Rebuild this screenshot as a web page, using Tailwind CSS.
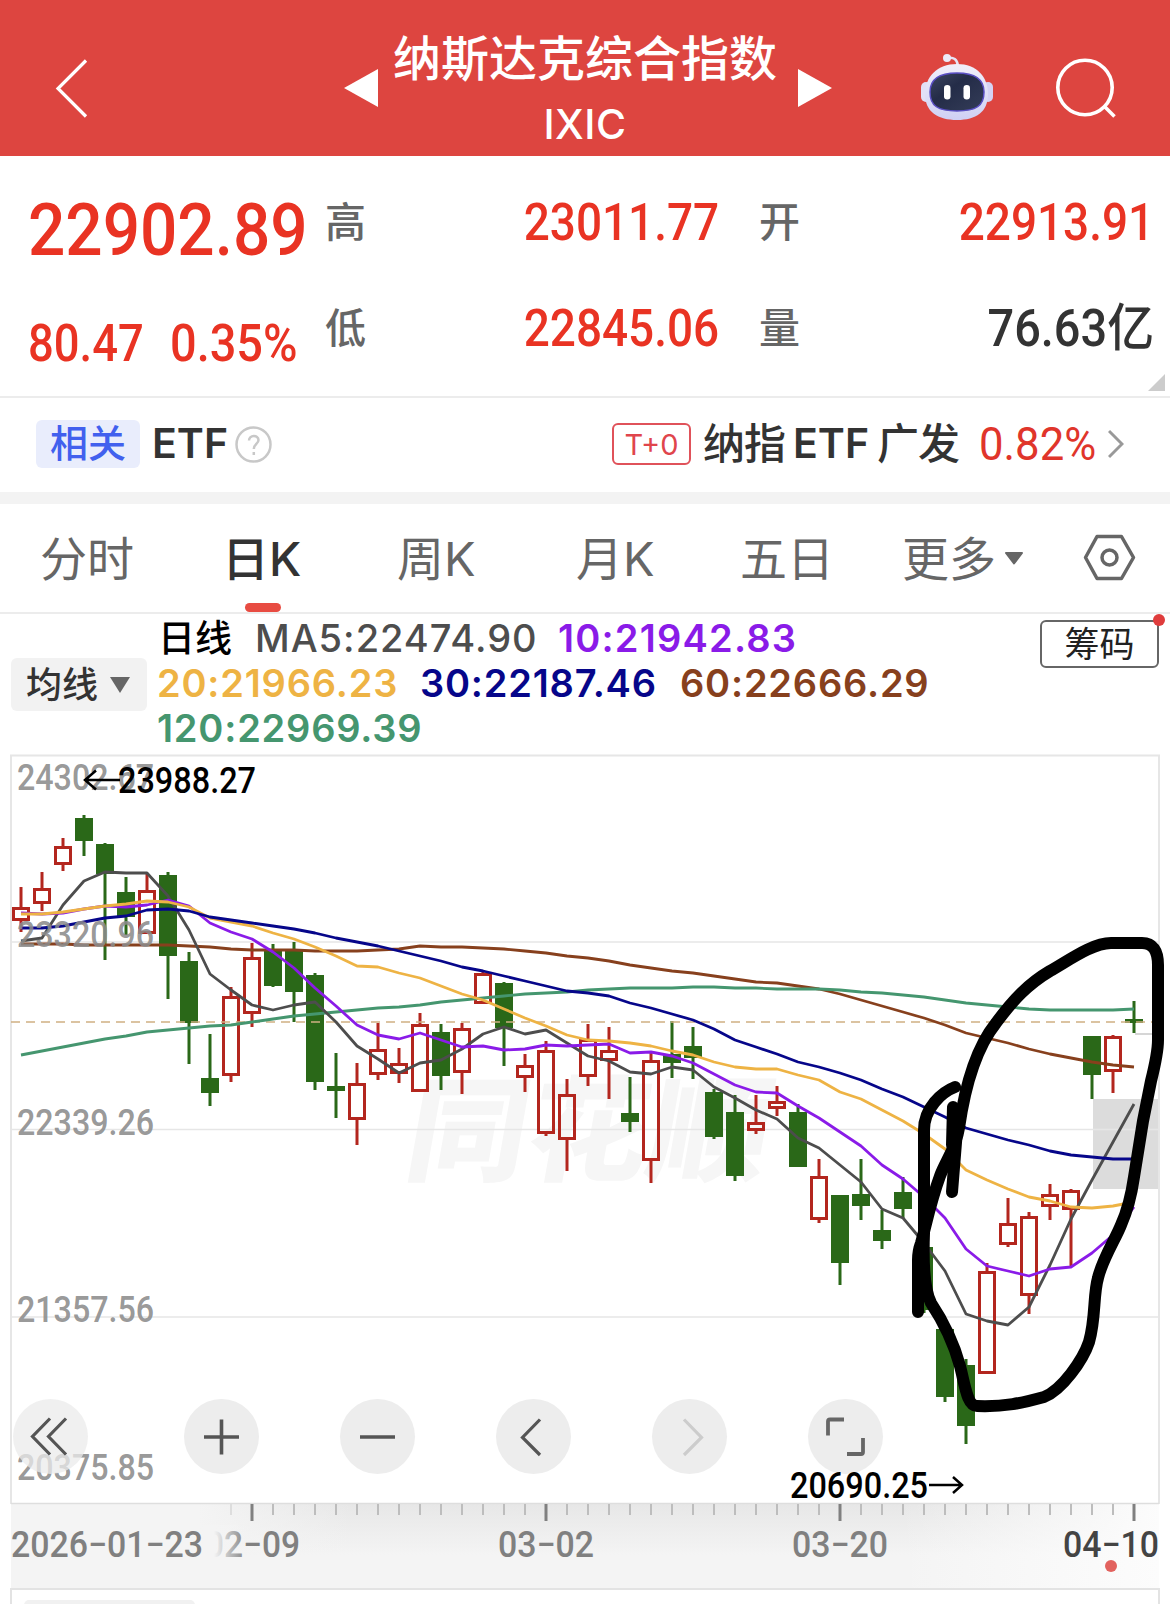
<!DOCTYPE html>
<html lang="zh-CN">

<head>
    <meta charset="UTF-8">
    <meta name="viewport" content="width=device-width, initial-scale=1.0">
    <title>纳斯达克综合指数 IXIC</title>
    <script src="https://cdn.jsdelivr.net/npm/@tailwindcss/browser@4"></script>
</head>

<body class="w-[1170px] h-[1604px] overflow-hidden bg-white font-['Roboto','Noto_Sans_CJK_SC',sans-serif] text-[#333]">
    <!-- Header -->
    <header class="flex h-[156px] bg-[#dd4540] text-white">
        <svg class="ml-[52px] w-10 h-[156px]" viewBox="52 0 40 156" fill="none" stroke="white" stroke-width="3.2">
            <path d="M86 60.500L58 88.500L86 116.500" />
        </svg>
        <svg class="ml-[252px] w-[34px] h-[156px]" viewBox="344 0 34 156" fill="white">
            <path d="M344 88L378 69V107Z" />
        </svg>
        <div class="w-[420px] flex flex-col items-center pt-[31px] pr-[6px] font-['Inter','Noto_Sans_CJK_SC',sans-serif] font-medium">
            <h1 class="h-14 leading-[56px] text-[48px] whitespace-nowrap">纳斯达克综合指数</h1>
            <p class="mt-[13px] leading-[48px] text-[41px] tracking-[0.5px]">IXIC</p>
        </div>
        <svg class="w-[34px] h-[156px]" viewBox="798 0 34 156" fill="white">
            <path d="M832 88L798 69V107Z" />
        </svg>
        <svg class="ml-[86px] w-[78px] h-[156px]" viewBox="918 0 78 156">
            <defs>
                <linearGradient id="shell" x1="0" y1="0" x2="0" y2="1">
                    <stop offset="0" stop-color="#f1effa" />
                    <stop offset="1" stop-color="#cfd0f4" />
                </linearGradient>
                <linearGradient id="visor" x1="0" y1="0" x2="1" y2="1">
                    <stop offset="0" stop-color="#3d4660" />
                    <stop offset="0.4" stop-color="#242c48" />
                    <stop offset="1" stop-color="#343d58" />
                </linearGradient>
            </defs>
            <path d="M947 58Q957 56 958 66" fill="none" stroke="#e6e3f4" stroke-width="2.500" />
            <circle cx="947" cy="58" r="4" fill="#eceaf8" />
            <rect x="921" y="82" width="10" height="20" rx="5" fill="#e2e0f6" />
            <rect x="983" y="82" width="10" height="20" rx="5" fill="#d5d3f4" />
            <path d="M957 64C977 64 988 77 988 94C988 112 976 120 957 120C938 120 925 112 925 94C925 77 937 64 957 64Z" fill="url(#shell)" />
            <path d="M957 73C976 73 984 80 984 92C984 106 976 111 957 111C938 111 930 106 930 92C930 80 938 73 957 73Z" fill="url(#visor)" stroke="#5a4fc4" stroke-width="1.500" />
            <rect x="944" y="85" width="6.500" height="14.500" rx="3.200" fill="white" />
            <rect x="963.500" y="85" width="6.500" height="14.500" rx="3.200" fill="white" />
        </svg>
        <svg class="ml-[58px] w-16 h-[156px]" viewBox="1054 0 64 156" fill="none" stroke="white" stroke-width="3.600">
            <circle cx="1085" cy="87.500" r="27.200" />
            <path d="M1104 106L1114.500 116.500" />
        </svg>
    </header>

    <!-- Quote -->
    <section class="relative flex h-[240px] font-medium text-[#e93323] whitespace-nowrap">
        <div class="w-[325px] pl-7">
            <p class="mt-[29px] h-[90px] leading-[90px] text-[73px] origin-left scale-x-90">22902.89</p>
            <p class="mt-[39px] h-[60px] leading-[60px] text-[51px] flex">
                <span class="w-[142px]"><span class="inline-block origin-left scale-x-[0.89]">80.47</span></span>
                <span class="inline-block origin-left scale-x-[0.92]">0.35%</span>
            </p>
        </div>
        <div class="w-[394px]">
            <div class="mt-[37px] h-[60px] flex items-center justify-between">
                <span class="pt-[2px] text-[41px] text-[#666]">高</span>
                <span class="text-[51px] origin-right scale-x-90">23011.77</span>
            </div>
            <div class="mt-[46px] h-[60px] flex items-center justify-between">
                <span class="pt-[2px] text-[41px] text-[#666]">低</span>
                <span class="text-[51px] origin-right scale-x-90">22845.06</span>
            </div>
        </div>
        <div class="ml-10 w-[395px]">
            <div class="mt-[37px] h-[60px] flex items-center justify-between">
                <span class="pt-[2px] text-[41px] text-[#666]">开</span>
                <span class="text-[51px] origin-right scale-x-90">22913.91</span>
            </div>
            <div class="mt-[46px] h-[60px] flex items-center justify-between">
                <span class="pt-[2px] text-[41px] text-[#666]">量</span>
                <span class="text-[51px] text-[#333] origin-right scale-x-[0.92]">76.63亿</span>
            </div>
        </div>
        <svg class="absolute right-[5px] bottom-[5px] w-[17px] h-[17px]" viewBox="0 0 17 17" fill="#ccc">
            <path d="M17 0V17H0Z" />
        </svg>
    </section>

    <!-- Related ETF -->
    <section class="flex items-center h-24 border-t-2 border-[#ececec] pl-9 pb-[2px] whitespace-nowrap">
        <span class="w-[104px] h-12 leading-[48px] rounded-md bg-[#e9edfc] text-center text-[38px] font-medium text-[#4160ee]">相关</span>
        <span class="ml-[12px] w-[80px] font-['Inter'] text-[41px] font-semibold">ETF</span>
        <svg class="ml-[3px] w-[37px] h-[37px]" viewBox="0 0 37 37" fill="none" stroke="#c8c8c8" stroke-width="2.500">
            <circle cx="18.500" cy="18.500" r="17" />
            <path d="M14 14.500C14 8.500 23.500 8.500 23.500 14C23.500 18 18.800 18 18.800 23" />
            <path d="M18.800 26V29" />
        </svg>
        <span class="ml-[340px] w-[79px] h-[42px] leading-[40px] border-2 border-[#e0525a] rounded-md text-center font-['Inter'] text-[29px] text-[#e0454c]">T+0</span>
        <span class="ml-[12px] text-[42px] font-medium w-[256px] flex justify-between"><span class="-tracking-[1px]">纳指</span><span class="font-['Inter'] text-[41px] font-semibold">ETF</span><span class="-tracking-[1px]">广发</span></span>
        <span class="ml-5 w-[121px] text-[47px] text-[#e0352b]"><span class="inline-block origin-left scale-x-[0.93]">0.82%</span></span>
        <svg class="ml-2 w-4 h-8" viewBox="0 0 16 32" fill="none" stroke="#999" stroke-width="3">
            <path d="M1 3L14 16L1 29" />
        </svg>
    </section>
    <div class="h-3 bg-[#f3f3f3]"></div>

    <!-- Period tabs -->
    <nav class="flex h-[110px] border-b-2 border-[#ececec] pl-10 text-[47px] leading-[109px] text-[#666] font-normal font-['Inter','Noto_Sans_CJK_SC',sans-serif] whitespace-nowrap">
        <span class="w-[182px]">分时</span>
        <span class="relative w-[175px] font-medium text-[#333]">日K<i class="absolute left-[23px] bottom-0 w-9 h-[9px] rounded-full bg-[#e84c42]"></i></span>
        <span class="w-[179px]">周K</span>
        <span class="w-[164px]">月K</span>
        <span class="w-[162px]">五日</span>
        <span class="w-[102px]">更多</span>
        <svg class="w-5 h-[108px]" viewBox="1004 504 20 108" fill="#666">
            <path d="M1006 553H1022L1014 563.500Z" stroke="#666" stroke-width="2" stroke-linejoin="round" />
        </svg>
        <svg class="ml-[58px] w-[56px] h-[108px]" viewBox="1082 504 56 108" fill="none" stroke="#666" stroke-width="3.500">
            <path d="M1097 536.500H1121.500L1133.500 557.500L1121.500 578.500H1097L1085.500 557.500Z" stroke-linejoin="round" />
            <circle cx="1109.500" cy="557.500" r="7.500" />
        </svg>
    </nav>

    <!-- Moving averages -->
    <section class="flex h-[136px] font-['Inter','Noto_Sans_CJK_SC',sans-serif] whitespace-nowrap">
        <button class="ml-[11px] mt-11 w-[136px] h-[53px] rounded-md bg-[#f2f2f2] flex items-center pl-[15px] text-[36px] font-medium text-[#333]">均线
            <svg class="ml-[11px] w-[22px] h-4" viewBox="0 0 22 16" fill="#666">
                <path d="M1 0H21L11 16Z" />
            </svg>
        </button>
        <div class="ml-[10px] w-[883px] pt-[2px] text-[38px] leading-[45px] font-semibold tracking-[0.8px]">
            <div class="flex h-[45px]">
                <span class="pl-[1px] w-[98px] text-[37px] tracking-normal font-medium text-black">日线</span>
                <span class="w-[303px] font-medium tracking-[1px] text-[#4d4d4d]">MA5:22474.90</span>
                <span class="tracking-[1.2px] text-[#8a1be8]">10:21942.83</span>
            </div>
            <div class="flex h-[45px]">
                <span class="w-[263px] text-[#eeb344]">20:21966.23</span>
                <span class="w-[260px] text-[#06068a]">30:22187.46</span>
                <span class="text-[#87401d]">60:22666.29</span>
            </div>
            <div class="h-[45px] text-[#45966f]">120:22969.39</div>
        </div>
        <button class="relative mt-[6px] w-[119px] h-12 leading-[44px] border-2 border-[#666] rounded-md text-[35px] font-normal text-[#222]">筹码
            <i class="absolute -right-[8px] -top-[8px] w-3 h-3 rounded-full bg-[#df3c3c]"></i>
        </button>
    </section>

    <!-- Candlestick chart -->
    <main class="relative">
        <svg id="chart" class="block w-[1170px] h-[854px]" viewBox="0 0 1170 854" font-family="Roboto" font-size="36" font-weight="500">
            <defs>
                <linearGradient id="axis" x1="0" y1="0" x2="0" y2="1">
                    <stop offset="0" stop-color="#e7e7e7" />
                    <stop offset="0.6" stop-color="#f4f4f4" />
                </linearGradient>
                <linearGradient id="fadeLeft" x1="0" y1="0" x2="1" y2="0">
                    <stop offset="0" stop-color="#f4f4f4" />
                    <stop offset="0.550" stop-color="#f4f4f4" />
                    <stop offset="1" stop-color="#f4f4f4" stop-opacity="0" />
                </linearGradient>
                <linearGradient id="fadeText" x1="0" y1="0" x2="1" y2="0">
                    <stop offset="0.250" stop-color="#f4f4f4" />
                    <stop offset="1" stop-color="#f4f4f4" stop-opacity="0" />
                </linearGradient>
                <linearGradient id="fadeRight" x1="0" y1="0" x2="1" y2="0">
                    <stop offset="0" stop-color="#fcfcfc" stop-opacity="0" />
                    <stop offset="1" stop-color="#fcfcfc" />
                </linearGradient>
            </defs>
            <text x="402" y="422" font-family="Noto Sans CJK SC" font-size="114" font-weight="900" fill="#f6f6f6" textLength="362" lengthAdjust="spacingAndGlyphs" transform="translate(74 0) skewX(-10)">同花顺</text>
            <rect x="1093" y="349" width="66" height="90" fill="#dcdcdc" />
            <path d="M1135 284H1155" stroke="#d6d6d6" stroke-width="2" />
            <g fill="none" stroke="#e6e6e6" stroke-width="2">
                <path d="M11 754V5.500H1159V754" />
                <path d="M11 192H1159M11 379.500H1159M11 567H1159" stroke-width="1.500" />
            </g>
            <g id="candles"></g>
            <path d="M11 272H1159" stroke="#cfb083" stroke-width="1.600" stroke-dasharray="9 6" />
            <g id="lines" fill="none" stroke-width="2.800" stroke-linejoin="round"></g>

            <g fill="#8c8c8c" fill-opacity="0.900">
                <text x="17" y="40" textLength="137" lengthAdjust="spacingAndGlyphs">24302.67</text>
                <text x="17" y="197" textLength="137" lengthAdjust="spacingAndGlyphs">23320.96</text>
                <text x="17" y="384.500" textLength="137" lengthAdjust="spacingAndGlyphs">22339.26</text>
                <text x="17" y="572" textLength="137" lengthAdjust="spacingAndGlyphs">21357.56</text>
                <text x="17" y="729.500" textLength="137" lengthAdjust="spacingAndGlyphs">20375.85</text>
            </g>
            <g fill="none" stroke="black" stroke-width="2.500">
                <path d="M120 30H85M96 20.500L85 30L96 39.500" />
                <path d="M929 735H962M953 727L962 735L953 743" />
            </g>
            <text x="118" y="43" textLength="138" lengthAdjust="spacingAndGlyphs">23988.27</text>

            <!-- Hand drawn circle -->
            <g fill="none" stroke="black" stroke-width="12" stroke-linecap="round" stroke-linejoin="round">
                <path d="M955 337C942 342 924 358 924 380V483Q922 535 931 553Q951 583 960 616C965 635 967 656 977 656C1005 657 1022 653 1044 647C1062 640 1083 610 1089 592C1096 568 1093 545 1098 528C1102 510 1116 488 1121 475Q1130 455 1134 427L1143 371L1151 331Q1158 303 1158 290V215Q1158 193 1142 193H1111C1092 193 1068 211 1050 221C1028 234 1013 250 996 273C972 303 963 350 959 378C956 398 946 410 940 426C930 453 925 480 921 493Q918 501 918 510V562" />
                <path d="M953 357L952 395M957 380L952 442" />
            </g>

            <!-- Date axis -->
            <rect x="11" y="754" width="1148" height="85" fill="url(#axis)" />
            <rect x="11" y="754" width="340" height="85" fill="url(#fadeLeft)" />
            <rect x="900" y="754" width="259" height="85" fill="url(#fadeRight)" />
            <path d="M11 753.500H1159" stroke="#dedede" stroke-width="1.500" />
            <g id="ticks"></g>
            <g fill="#808080">
                <text x="205" y="807" textLength="95" lengthAdjust="spacingAndGlyphs">02−09</text>
                <rect x="203" y="775" width="44" height="40" fill="url(#fadeText)" />
                <text x="11" y="807" textLength="192" lengthAdjust="spacingAndGlyphs">2026−01−23</text>
                <text x="498" y="807" textLength="96" lengthAdjust="spacingAndGlyphs">03−02</text>
                <text x="792" y="807" textLength="96" lengthAdjust="spacingAndGlyphs">03−20</text>
                <text x="1063" y="807" textLength="96" lengthAdjust="spacingAndGlyphs" fill="#444">04−10</text>
            </g>
            <circle cx="1111" cy="816" r="6" fill="#e2625e" />
            <path d="M11 854V839H1159V854" fill="none" stroke="#e3e3e3" stroke-width="2" />
            <rect x="24" y="850" width="171" height="20" rx="5" fill="#f1f1f1" />
        </svg>

        <!-- Chart controls -->
        <div class="absolute left-[13px] top-[649px] flex">
            <button class="w-[75px] h-[75px] rounded-full bg-[#ebebeb]/75">
                <svg viewBox="0 0 75 75" fill="none" stroke="#555" stroke-width="3.200"><path d="M37 19.500L19.500 37.500L37 55.500M53 19.500L35.500 37.500L53 55.500" /></svg>
            </button>
            <button class="ml-[96px] w-[75px] h-[75px] rounded-full bg-[#ededed]">
                <svg viewBox="0 0 75 75" fill="none" stroke="#555" stroke-width="3.600"><path d="M20 38H55M37.500 20.500V55.500" /></svg>
            </button>
            <button class="ml-[81px] w-[75px] h-[75px] rounded-full bg-[#ededed]">
                <svg viewBox="0 0 75 75" fill="none" stroke="#555" stroke-width="3.600"><path d="M20 38H55" /></svg>
            </button>
            <button class="ml-[81px] w-[75px] h-[75px] rounded-full bg-[#ededed]">
                <svg viewBox="0 0 75 75" fill="none" stroke="#555" stroke-width="3.200"><path d="M44 20.500L26.500 38.500L44 56" /></svg>
            </button>
            <button class="ml-[81px] w-[75px] h-[75px] rounded-full bg-[#ededed]">
                <svg viewBox="0 0 75 75" fill="none" stroke="#ccc" stroke-width="3.200"><path d="M32 20.500L49.500 38.500L32 56" /></svg>
            </button>
            <button class="ml-[81px] w-[75px] h-[75px] rounded-full bg-[#ededed]">
                <svg viewBox="0 0 75 75" fill="none" stroke="#666" stroke-width="3.800"><path d="M36 20.500H22Q20 20.500 20 22.500V36.500M39 55H53Q55 55 55 53V39" /></svg>
            </button>
        </div>
        <!-- Low marker sits above the controls -->
        <svg class="absolute left-[780px] top-[706px] w-[160px] h-[60px]" viewBox="780 706 160 60" font-family="Roboto" font-size="36" font-weight="500">
            <text x="790" y="748" textLength="138" lengthAdjust="spacingAndGlyphs">20690.25</text>
        </svg>
    </main>

    <script>
        const NS = 'http://www.w3.org/2000/svg';
        const xAt = i => 21 + i * 21;

        function add(parent, tag, attrs) {
            const el = document.createElementNS(NS, tag);
            for (const key in attrs) el.setAttribute(key, attrs[key]);
            parent.appendChild(el);
        }

        // [up, high, body top, body bottom, low]
        const candles = [
            [1, 137, 157, 171, 182], [1, 122, 138, 154, 161], [1, 88, 96, 115, 121], [0, 65, 68, 91, 106],
            [0, 93, 94, 124, 210], [0, 127, 142, 167, 185], [1, 124, 140, 184, 184], [0, 122, 125, 206, 249],
            [0, 202, 211, 273, 314], [0, 284, 328, 343, 356], [1, 237, 246, 326, 332], [1, 193, 207, 264, 277],
            [0, 194, 200, 236, 237], [0, 192, 200, 242, 272], [0, 223, 225, 332, 340], [0, 303, 336, 341, 368],
            [1, 313, 333, 370, 395], [1, 273, 299, 325, 330], [1, 298, 313, 324, 333], [1, 263, 274, 342, 342],
            [0, 274, 282, 326, 340], [1, 273, 278, 323, 344], [1, 220, 223, 254, 254], [0, 232, 233, 278, 316],
            [1, 304, 315, 328, 342], [1, 291, 300, 384, 386], [1, 329, 344, 390, 421], [1, 274, 289, 327, 336],
            [1, 277, 300, 311, 349], [0, 327, 363, 372, 382], [1, 303, 310, 411, 433], [0, 271, 304, 313, 328],
            [0, 277, 296, 308, 329], [0, 339, 342, 387, 389], [0, 345, 362, 426, 431], [1, 345, 372, 381, 384],
            [1, 336, 351, 359, 366], [0, 354, 362, 417, 417], [1, 409, 426, 470, 473], [0, 445, 445, 513, 535],
            [0, 409, 444, 456, 470], [0, 460, 480, 491, 499], [0, 427, 442, 459, 468], [0, 493, 497, 560, 563],
            [0, 577, 579, 647, 652], [0, 609, 615, 676, 694], [1, 513, 521, 624, 624], [1, 448, 473, 495, 497],
            [1, 462, 466, 546, 564], [1, 434, 444, 457, 470], [1, 439, 440, 460, 517], [0, 286, 286, 325, 349],
            [1, 285, 286, 322, 343], [0, 251, 269, 273, 283]
        ];

        const averages = {
            '#87401d': [194, 194, 194, 195, 195, 195, 195, 195, 196, 197, 199, 200, 200, 200, 201, 201, 201, 200, 199, 196, 197, 197, 198, 199, 201, 203, 206, 208, 211, 215, 218, 221, 223, 226, 229, 232, 233, 236, 239, 244, 250, 256, 262, 268, 275, 283, 288, 293, 299, 304, 308, 312, 315, 317],
            '#45966f': [305, 301, 297, 293, 289, 286, 282, 280, 278, 276, 275, 272, 269, 266, 264, 262, 260, 258, 257, 255, 252, 250, 248, 246, 244, 243, 242, 240, 239, 238, 238, 238, 237, 237, 238, 238, 239, 239, 239, 240, 242, 243, 245, 247, 250, 253, 255, 257, 259, 260, 260, 260, 260, 259],
            '#4d4d4d': [191, 188, 155, 131, 122, 123, 123, 146, 180, 224, 240, 255, 260, 255, 252, 272, 296, 309, 323, 313, 310, 299, 284, 277, 284, 280, 293, 306, 311, 322, 324, 317, 320, 337, 348, 360, 369, 388, 398, 415, 432, 459, 468, 493, 521, 564, 571, 575, 557, 515, 469, 430, 392, 354],
            '#8a1be8': [163, 164, 163, 159, 156, 157, 155, 150, 156, 173, 182, 189, 202, 218, 238, 256, 275, 285, 289, 283, 290, 297, 296, 300, 299, 295, 296, 295, 294, 303, 302, 306, 313, 324, 335, 342, 343, 356, 368, 382, 396, 415, 429, 447, 468, 499, 516, 521, 526, 519, 517, 503, 485, 457],
            '#eeb344': [164, 164, 162, 159, 156, 154, 151, 152, 157, 168, 172, 176, 183, 189, 197, 206, 216, 217, 223, 228, 236, 244, 250, 259, 268, 276, 285, 290, 291, 293, 296, 301, 305, 312, 317, 319, 319, 325, 330, 342, 349, 360, 371, 384, 399, 420, 430, 439, 447, 451, 457, 458, 456, 452],
            '#06068a': [178, 178, 176, 172, 168, 166, 160, 159, 161, 167, 170, 173, 176, 179, 183, 188, 192, 196, 201, 206, 211, 217, 221, 226, 231, 236, 241, 243, 246, 253, 258, 264, 270, 279, 290, 297, 304, 312, 317, 323, 330, 339, 347, 357, 367, 378, 384, 390, 395, 401, 405, 407, 409, 409]
        };

        const candleGroup = document.getElementById('candles');
        candles.forEach(([up, high, top, bottom, low], i) => {
            const x = xAt(i);
            const color = up ? '#b3261e' : '#2a6818';
            add(candleGroup, 'path', { d: `M${x} ${high}V${top}M${x} ${bottom}V${low}`, stroke: color, 'stroke-width': 3 });
            if (up) {
                add(candleGroup, 'rect', { x: x - 7.5, y: top + 1.5, width: 15, height: bottom - top - 3, fill: 'none', stroke: color, 'stroke-width': 3 });
            } else {
                add(candleGroup, 'rect', { x: x - 9, y: top, width: 18, height: bottom - top, fill: color });
            }
        });

        const lineGroup = document.getElementById('lines');
        for (const color in averages) {
            add(lineGroup, 'polyline', { points: averages[color].map((y, i) => `${xAt(i)},${y}`).join(' '), stroke: color });
        }

        const tickGroup = document.getElementById('ticks');
        for (let i = 10; i < 54; i++) {
            const major = (i - 11) % 14 === 0;
            add(tickGroup, 'path', {
                d: `M${xAt(i)} 754V${major ? 771 : 765}`,
                stroke: major ? '#808080' : i === 10 ? '#ddd' : '#bdbdbd',
                'stroke-width': major ? 3 : 2
            });
        }
    </script>
</body>

</html>
